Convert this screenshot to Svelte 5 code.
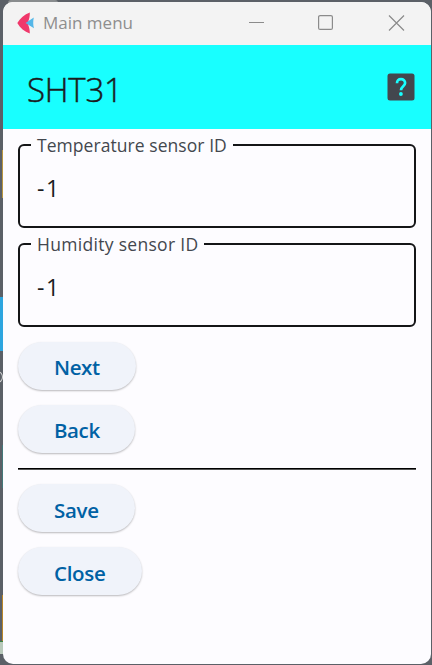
<script>
  const fields = [
    { label: 'Temperature sensor ID', value: '-1', kind: 'temperature' },
    { label: 'Humidity sensor ID', value: '-1', kind: 'humidity' }
  ];
</script>

<div class="desktop">
  <i class="speck gold"></i>
  <i class="speck blue"></i>
  <i class="speck ring"></i>
  <i class="speck teal"></i>
  <i class="speck amber"></i>
  <i class="speck green"></i>
  <i class="speck cloud"></i>
  <div class="window">
    <div class="titlebar">
      <svg class="logo" width="18" height="24" viewBox="0 0 18 24">
        <path d="M12.800 1.500C7.500 3.500 3 7.500.3 12c2.800 4.800 7.200 8.700 12.500 10.600C12.900 19.500 12.500 17 10.500 12 12.500 8 12.900 5 12.800 1.500Z" fill="#f0386b" />
        <path d="M8.500 12 16.800 6.500C16 10 16 14 17 17.300Z" fill="#55b7e8" />
      </svg>
      <span class="name">Main menu</span>
      <svg class="controls" width="160" height="18" viewBox="0 0 160 18" fill="none" stroke="#8b8b8b" stroke-width="1.2">
        <path d="M1 8.500H16M141 1.500l15 15M156 1.500l-15 15" />
        <rect x="70.600" y="1.600" width="13.800" height="13.800" rx="1.500" />
      </svg>
    </div>
    <header>
      <h1>SHT31</h1>
      <svg width="28" height="28" viewBox="0 0 28 28">
        <rect x=".5" y=".5" width="27" height="27" rx="2.500" fill="#43474e" />
        <path d="M10 10.200C10 7.500 11.600 6.100 14 6.100s4.100 1.600 4.100 3.900c0 3-4.100 3.500-4.100 7.200" fill="none" stroke="#18ffff" stroke-width="2.700" />
        <circle cx="13.900" cy="21" r="1.900" fill="#18ffff" />
      </svg>
    </header>
    <main>
      {#each fields as field}
        <fieldset>
          <legend class={field.kind}>{field.label}</legend>
          <span class="value">{field.value}</span>
        </fieldset>
      {/each}
      <button class="next">Next</button>
      <button class="back">Back</button>
      <hr />
      <button class="save">Save</button>
      <button class="close">Close</button>
    </main>
  </div>
</div>

<style>
  * { box-sizing: border-box; }
  .desktop {
    position: relative;
    width: 432px;
    height: 665px;
    padding: 2px 1px 1px 3px;
    overflow: hidden;
    background: #5b6067;
    font-family: "Open Sans", "Noto Sans", sans-serif;
  }
  .speck { position: absolute; left: 0; width: 4px; }
  .gold { top: 150px; height: 48px; left: 2px; background: #b9963f; }
  .blue { top: 297px; height: 54px; background: #2da5df; }
  .ring { top: 371px; left: -8px; width: 11px; height: 12px; border: 1px solid #d8d8d8; border-radius: 50%; }
  .teal { top: 445px; left: 2px; width: 1px; height: 43px; background: #437778; }
  .amber { top: 595px; left: 2px; height: 46px; background: #b98628; }
  .green { top: 641px; height: 13px; background: #b9c9bb; border-top: 1px solid #398345; }
  .cloud { top: 0; left: 8px; width: 50px; height: 6px; background: #898c8e; border-radius: 4px; }
  .window {
    position: relative;
    height: 662px;
    overflow: hidden;
    border-radius: 10px;
    background: #fdfcff;
  }
  .titlebar {
    display: flex;
    align-items: center;
    height: 43px;
    padding: 0 23px 2px 14px;
    background: #f3f3f3;
  }
  .name { margin: 1px 0 0 8px; font-size: 17px; line-height: 24px; color: #8e8e8e; white-space: nowrap; }
  .controls { margin-left: auto; }
  header {
    display: flex;
    align-items: center;
    justify-content: space-between;
    height: 84px;
    padding: 0 16px 0 24px;
    background: #18ffff;
  }
  h1 {
    margin: 5px 0 0;
    font-size: 33px;
    line-height: 40px;
    font-weight: 300;
    color: #1a1c1e;
    letter-spacing: -.2px;
    -webkit-text-stroke: .45px #1a1c1e;
  }
  main { display: flex; flex-direction: column; align-items: flex-start; gap: 15px; padding: 15px; }
  fieldset {
    width: 398px;
    height: 95px;
    min-width: 0;
    margin: -11px 0 0;
    padding: 0 17px;
    border: 2px solid #141517;
    border-radius: 6px;
  }
  legend {
    height: 24px;
    margin-left: -6px;
    padding: 0 6px;
    font-size: 17.500px;
    line-height: 25px;
    color: #43474e;
    white-space: nowrap;
  }
  .temperature { letter-spacing: .06px; }
  .humidity { letter-spacing: .3px; }
  .value { display: block; margin-top: 14px; font-size: 23px; line-height: 34px; color: #1a1c1e; letter-spacing: 1.500px; }
  button {
    height: 48px;
    padding: 1px 36px 0;
    border: 0;
    border-radius: 24px;
    background: #f0f3fa;
    box-shadow: 0 1px 2px rgba(0, 0, 0, .27);
    font: 600 20.500px/48px "Open Sans", "Noto Sans", sans-serif;
    letter-spacing: -.4px;
    color: #0061a4;
    text-align: left;
    white-space: nowrap;
  }
  .next { width: 118px; }
  .back { width: 117px; }
  .save { width: 117px; letter-spacing: -.3px; }
  .close { width: 124px; letter-spacing: -.3px; }
  .save, .close { padding-top: 2px; }
  hr { width: 398px; height: 2px; margin: 0 0 -1px; border: 0; background: linear-gradient(#000 50%, #555 50%); }
</style>
